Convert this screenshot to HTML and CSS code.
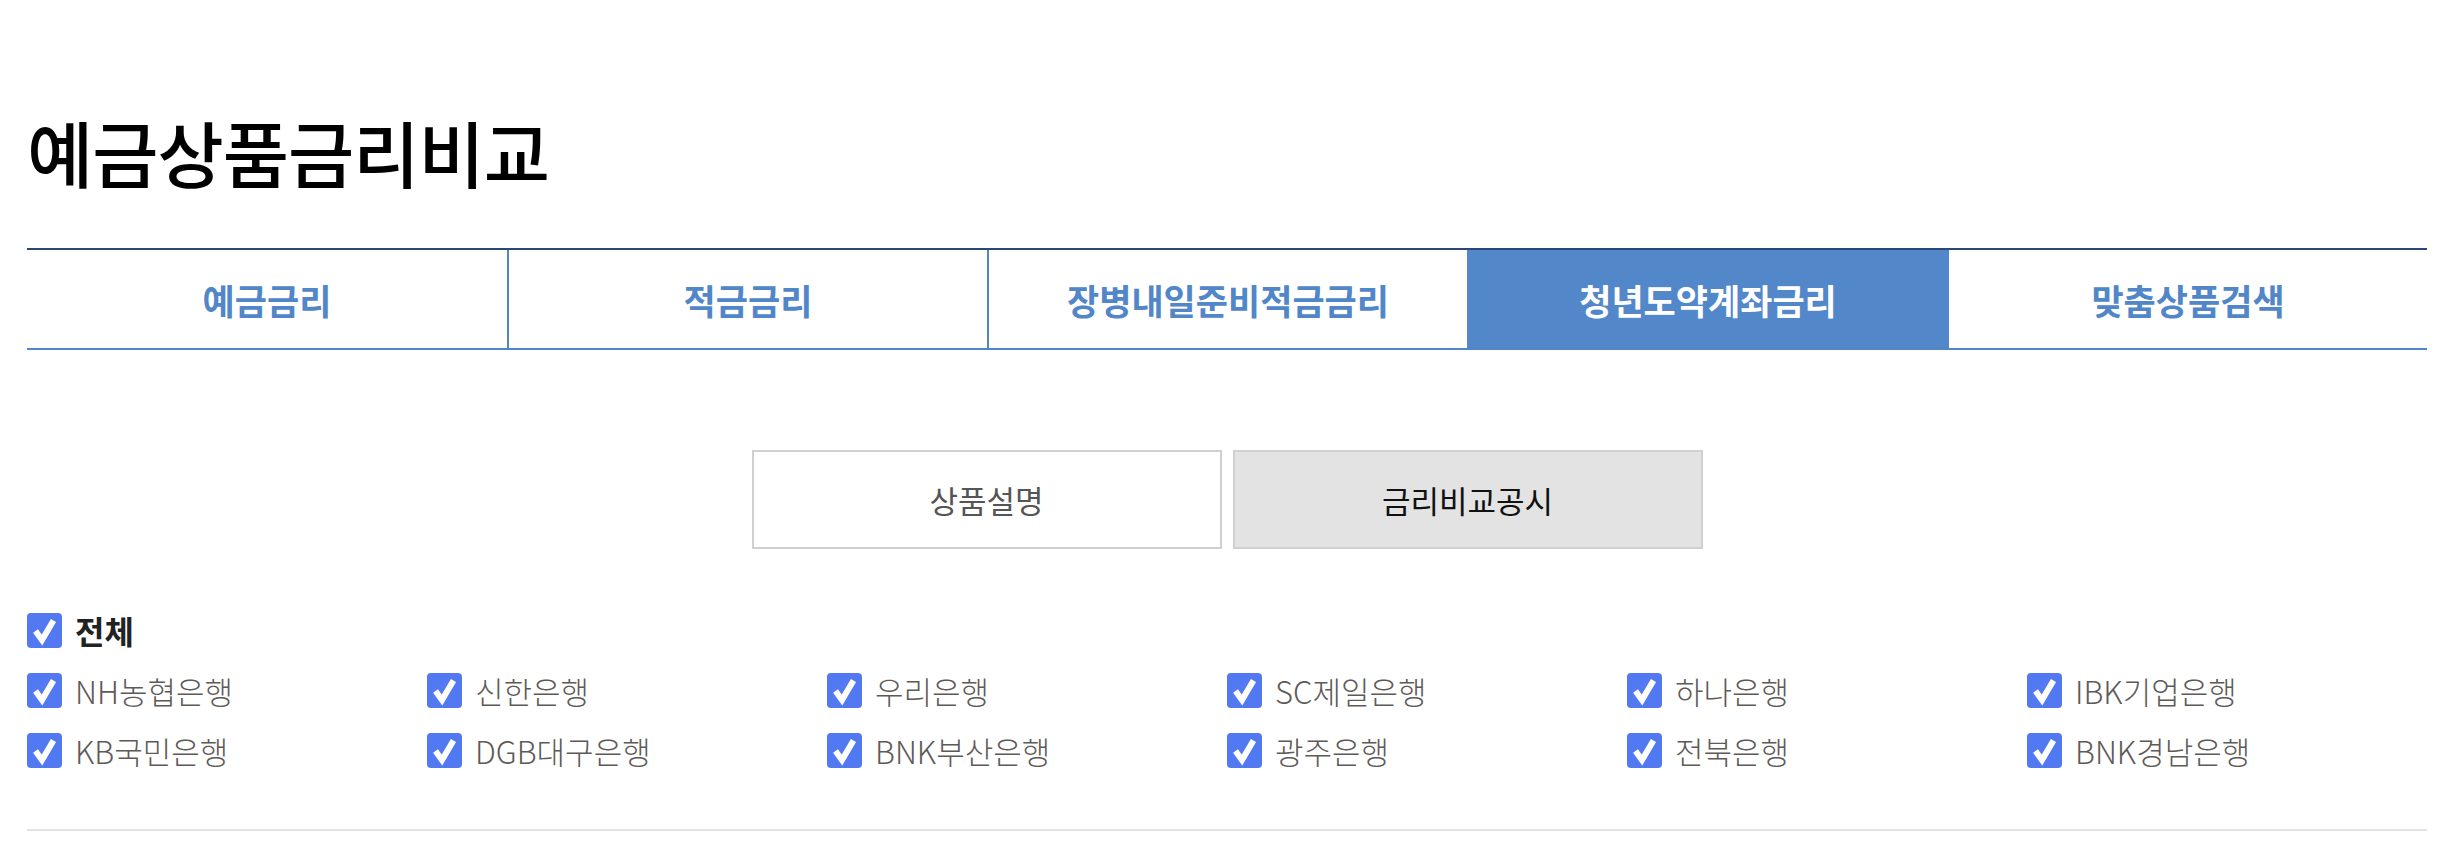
FILE: index.html
```html
<!DOCTYPE html>
<html lang="ko">
<head>
<meta charset="utf-8">
<title>예금상품금리비교</title>
<link rel="stylesheet" href="styles.css">
</head>
<body>
<div class="page">
  <h1 class="title">예금상품금리비교</h1>

  <nav class="tabs">
    <a class="tab">예금금리</a>
    <a class="tab">적금금리</a>
    <a class="tab">장병내일준비적금금리</a>
    <a class="tab tab-active">청년도약계좌금리</a>
    <a class="tab">맞춤상품검색</a>
  </nav>

  <div class="subtabs">
    <a class="subtab">상품설명</a>
    <a class="subtab subtab-active">금리비교공시</a>
  </div>

  <div class="banks">
    <div class="bank-row">
      <label class="check check-all"><span class="box"><svg viewBox="0 0 35 35" width="35" height="35"><path d="M8.5 18 L15 27 L26.5 7.5" fill="none" stroke="#fff" stroke-width="6"/></svg></span>전체</label>
    </div>
    <div class="bank-grid">
      <label class="check"><span class="box"><svg viewBox="0 0 35 35" width="35" height="35"><path d="M8.5 18 L15 27 L26.5 7.5" fill="none" stroke="#fff" stroke-width="6"/></svg></span>NH농협은행</label>
      <label class="check"><span class="box"><svg viewBox="0 0 35 35" width="35" height="35"><path d="M8.5 18 L15 27 L26.5 7.5" fill="none" stroke="#fff" stroke-width="6"/></svg></span>신한은행</label>
      <label class="check"><span class="box"><svg viewBox="0 0 35 35" width="35" height="35"><path d="M8.5 18 L15 27 L26.5 7.5" fill="none" stroke="#fff" stroke-width="6"/></svg></span>우리은행</label>
      <label class="check"><span class="box"><svg viewBox="0 0 35 35" width="35" height="35"><path d="M8.5 18 L15 27 L26.5 7.5" fill="none" stroke="#fff" stroke-width="6"/></svg></span>SC제일은행</label>
      <label class="check"><span class="box"><svg viewBox="0 0 35 35" width="35" height="35"><path d="M8.5 18 L15 27 L26.5 7.5" fill="none" stroke="#fff" stroke-width="6"/></svg></span>하나은행</label>
      <label class="check"><span class="box"><svg viewBox="0 0 35 35" width="35" height="35"><path d="M8.5 18 L15 27 L26.5 7.5" fill="none" stroke="#fff" stroke-width="6"/></svg></span>IBK기업은행</label>
      <label class="check"><span class="box"><svg viewBox="0 0 35 35" width="35" height="35"><path d="M8.5 18 L15 27 L26.5 7.5" fill="none" stroke="#fff" stroke-width="6"/></svg></span>KB국민은행</label>
      <label class="check"><span class="box"><svg viewBox="0 0 35 35" width="35" height="35"><path d="M8.5 18 L15 27 L26.5 7.5" fill="none" stroke="#fff" stroke-width="6"/></svg></span>DGB대구은행</label>
      <label class="check"><span class="box"><svg viewBox="0 0 35 35" width="35" height="35"><path d="M8.5 18 L15 27 L26.5 7.5" fill="none" stroke="#fff" stroke-width="6"/></svg></span>BNK부산은행</label>
      <label class="check"><span class="box"><svg viewBox="0 0 35 35" width="35" height="35"><path d="M8.5 18 L15 27 L26.5 7.5" fill="none" stroke="#fff" stroke-width="6"/></svg></span>광주은행</label>
      <label class="check"><span class="box"><svg viewBox="0 0 35 35" width="35" height="35"><path d="M8.5 18 L15 27 L26.5 7.5" fill="none" stroke="#fff" stroke-width="6"/></svg></span>전북은행</label>
      <label class="check"><span class="box"><svg viewBox="0 0 35 35" width="35" height="35"><path d="M8.5 18 L15 27 L26.5 7.5" fill="none" stroke="#fff" stroke-width="6"/></svg></span>BNK경남은행</label>
    </div>
  </div>

  <div class="divider"></div>
</div>
</body>
</html>
```

FILE: styles.css
```css
html, body {
  margin: 0;
  padding: 0;
  background: #fff;
}

body {
  font-family: "Noto Sans CJK KR", "Noto Sans", sans-serif;
  color: #222;
}

.page {
  width: 2400px;
  margin-left: 27px;
}

.title {
  margin: 0;
  padding-top: 101px;
  height: 248px;
  box-sizing: border-box;
  font-size: 72px;
  line-height: 100px;
  font-weight: 500;
  letter-spacing: -1px;
  color: #000;
}

.tabs {
  display: grid;
  grid-template-columns: repeat(5, 480px);
  border-top: 2px solid #2b4677;
  border-bottom: 2px solid #5186c8;
  height: 98px;
}

.tab {
  display: flex;
  align-items: center;
  justify-content: center;
  border-left: 2px solid #5186c8;
  font-size: 35px;
  font-weight: 700;
  letter-spacing: 0;
  color: #5186c8;
}

.tab:first-child {
  border-left: none;
}

.tab-active {
  background: #5287c9;
  color: #fff;
  border-left-color: #5287c9;
}

.subtabs {
  display: flex;
  justify-content: center;
  gap: 11px;
  margin-top: 100px;
}

.subtab {
  width: 470px;
  height: 99px;
  box-sizing: border-box;
  border: 2px solid #d0d0d0;
  display: flex;
  align-items: center;
  justify-content: center;
  font-size: 31px;
  letter-spacing: 0;
  color: #555;
}

.subtab-active {
  background: #e3e3e3;
  color: #111;
}

.banks {
  margin-top: 51px;
}

.bank-row {
  height: 60px;
  display: flex;
  align-items: center;
}

.bank-grid {
  display: grid;
  grid-template-columns: repeat(6, 400px);
  grid-auto-rows: 60px;
}

.check {
  display: flex;
  align-items: center;
  gap: 13px;
  font-size: 31px;
  font-weight: 300;
  letter-spacing: 0;
  color: #5e5a58;
}

.check-all {
  font-size: 32px;
  font-weight: 700;
  color: #222;
}

.box {
  width: 35px;
  height: 35px;
  border-radius: 4px;
  background: #5279f2;
  display: block;
  flex: none;
}

.box svg {
  display: block;
}

.divider {
  margin-top: 49px;
  height: 2px;
  background: #e2e2e2;
}
```
